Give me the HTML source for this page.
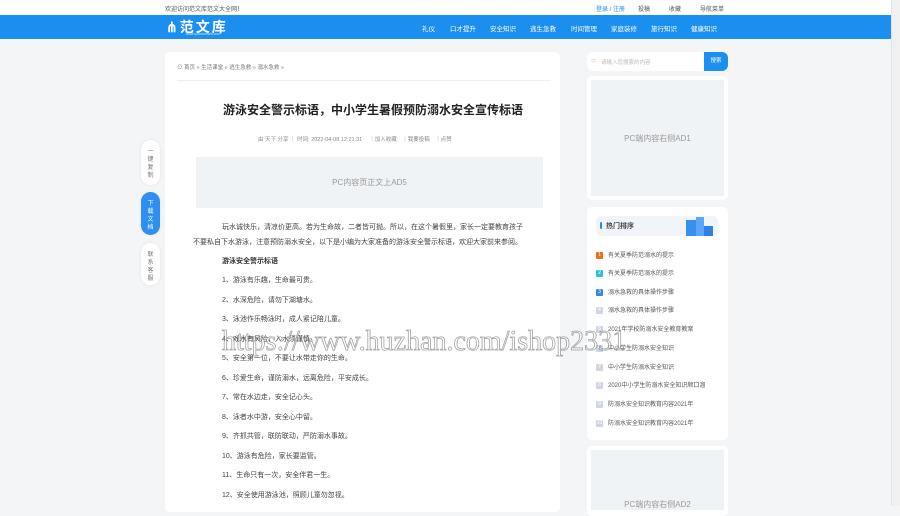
<!DOCTYPE html>
<html><head><meta charset="utf-8"><style>
*{margin:0;padding:0;box-sizing:border-box}
body{width:900px;height:506px;overflow:hidden;background:#f4f5f7;font-family:"Liberation Sans","Noto Sans CJK SC",sans-serif;color:#333;position:relative}
.top{position:absolute;left:0;top:0;width:891px;height:15px;background:#fff;font-size:6px;color:#555}
.nav{position:absolute;left:0;top:15px;width:891px;height:24px;background:#1b8ff0}
.nav span{position:absolute;top:8px;font-size:6.5px;color:#fff}
.sb{position:absolute;right:0;top:0;width:9px;height:506px;background:#f0f0f0;border-left:1px solid #e4e4e4}
.card{position:absolute;background:#fff;border-radius:5px}
.ad{position:absolute;background:#f0f3f6;color:#999;display:flex;align-items:center;justify-content:center}
.p{position:absolute;font-size:7px;color:#444;white-space:nowrap}
.fb{position:absolute;left:141px;width:19px;border-radius:10px;background:#fff;font-size:6px;color:#777;text-align:center;line-height:8px;padding-top:8px;box-shadow:0 0 3px rgba(0,0,0,.08)}
.hot{position:absolute;left:596px;font-size:6px;color:#555;white-space:nowrap}
.hot b{display:inline-block;width:7px;height:7px;border-radius:1px;background:#cfd6df;color:#fff;font-size:5px;text-align:center;line-height:7px;margin-right:5px;font-weight:normal;vertical-align:middle}
.wm{position:absolute;left:222px;top:326px;font-family:"Liberation Serif",serif;font-size:28px;color:rgba(255,255,255,.3);-webkit-text-stroke:0.8px rgba(90,90,90,.55);white-space:nowrap}
</style></head><body>
<div class="top"><span style="position:absolute;left:165px;top:4px">欢迎访问范文库范文大全网！</span>
<span style="position:absolute;left:596px;top:4px;color:#1b8ff0">登录 / 注册</span>
<span style="position:absolute;left:638px;top:4px">投稿</span><span style="position:absolute;left:669px;top:4px">收藏</span><span style="position:absolute;left:700px;top:4px">导航菜单</span></div>
<div class="nav">
<span style="left:166px;top:2px;font-size:14px;font-weight:bold;letter-spacing:2px">⋔范文库</span>
<span style="left:186px;top:17px;font-size:3.5px;opacity:.8">www.yourdomain.com</span>
<span style="left:422px">礼仪</span><span style="left:450px">口才提升</span><span style="left:490px">安全知识</span><span style="left:530px">逃生急救</span><span style="left:571px">时间管理</span><span style="left:611px">家庭装修</span><span style="left:651px">旅行知识</span><span style="left:691px">健康知识</span>
</div>
<div class="card" style="left:165px;top:52px;width:395px;height:460px"></div>
<div class="p" style="left:177px;top:63px;font-size:5.5px;color:#777">⊙ 首页 » 生活课堂 » 逃生急救 » 溺水急救 »</div>
<div style="position:absolute;left:177px;top:80px;width:374px;height:1px;background:#eee"></div>
<div class="p" style="left:223px;top:101px;font-size:12px;font-weight:bold;color:#222">游泳安全警示标语，中小学生暑假预防溺水安全宣传标语</div>
<div class="p" style="left:258px;top:135px;font-size:5.5px;color:#888">由 天下 分享 ｜ 时间: 2022-04-08 12:21:31 　｜加入收藏　｜我要投稿　｜点赞</div>
<div class="ad" style="left:196px;top:157px;width:347px;height:51px;font-size:8px">PC内容页正文上AD5</div>
<div class="p" style="left:222px;top:222px">玩水诚快乐，清凉价更高。若为生命故，二者皆可抛。所以，在这个暑假里，家长一定要教育孩子</div>
<div class="p" style="left:193px;top:237px">不要私自下水游泳，注意预防溺水安全，以下是小编为大家准备的游泳安全警示标语，欢迎大家前来参阅。</div>
<div class="p" style="left:222px;top:256px;font-weight:bold;color:#333">游泳安全警示标语</div>
<div class="p" style="left:222px;top:275px">1、游泳有乐趣，生命最可贵。</div>
<div class="p" style="left:222px;top:295px">2、水深危险，请勿下湖塘水。</div>
<div class="p" style="left:222px;top:314px">3、泳池作乐畅泳时，成人紧记陪儿童。</div>
<div class="p" style="left:222px;top:334px">4、戏水有风险，入水须谨慎。</div>
<div class="p" style="left:222px;top:353px">5、安全第一位，不要让水带走你的生命。</div>
<div class="p" style="left:222px;top:373px">6、珍爱生命，谨防溺水，远离危险，平安成长。</div>
<div class="p" style="left:222px;top:392px">7、常在水边走，安全记心头。</div>
<div class="p" style="left:222px;top:412px">8、泳者水中游，安全心中留。</div>
<div class="p" style="left:222px;top:431px">9、齐抓共管，联防联动，严防溺水事故。</div>
<div class="p" style="left:222px;top:451px">10、游泳有危险，家长要监管。</div>
<div class="p" style="left:222px;top:470px">11、生命只有一次，安全伴君一生。</div>
<div class="p" style="left:222px;top:490px">12、安全使用游泳池，照顾儿童勿忽视。</div>
<div class="fb" style="top:140px;height:45px">一<br>键<br>复<br>制</div>
<div class="fb" style="top:192px;height:43px;background:#2d8ff0;color:#fff">下<br>载<br>文<br>档</div>
<div class="fb" style="top:243px;height:42px">联<br>系<br>客<br>服</div>
<div class="card" style="left:587px;top:52px;width:141px;height:19px;border-radius:6px"></div>
<div class="p" style="left:591px;top:56px;font-size:8px;color:#e0a080">○</div>
<div class="p" style="left:601px;top:58px;font-size:5.5px;color:#bbb">请输入您搜索的内容</div>
<div style="position:absolute;left:704px;top:52px;width:24px;height:19px;background:#1b8ff0;border-radius:0 6px 6px 0;color:#fff;font-size:5.5px;text-align:center;line-height:19px">搜索</div>
<div class="card" style="left:587px;top:76px;width:141px;height:124px"></div>
<div class="ad" style="left:591px;top:80px;width:133px;height:116px;font-size:8px">PC端内容右侧AD1</div>
<div class="card" style="left:587px;top:207px;width:141px;height:233px"></div>
<div style="position:absolute;left:596px;top:216px;width:122px;height:20px;background:#f1f4f8;border-radius:5px"></div>
<div style="position:absolute;left:600px;top:222px;width:2px;height:7px;background:#1b8ff0;border-radius:1px"></div>
<div class="p" style="left:606px;top:221px;font-size:7px;font-weight:bold">热门排序</div>
<div style="position:absolute;left:686px;top:220px;width:10px;height:16px;background:#3a8ef0"></div>
<div style="position:absolute;left:696px;top:217px;width:8px;height:19px;background:#5aa8f5"></div>
<div style="position:absolute;left:704px;top:226px;width:9px;height:10px;background:#2f7fe8"></div>
<div class="hot" style="top:250px"><b style="background:#f06a1f">1</b>有关夏季防范溺水的提示</div>
<div class="hot" style="top:268px"><b style="background:#2cc3d8">2</b>有关夏季防范溺水的提示</div>
<div class="hot" style="top:287px"><b style="background:#3b87e0">3</b>溺水急救的具体操作步骤</div>
<div class="hot" style="top:305px"><b>4</b>溺水急救的具体操作步骤</div>
<div class="hot" style="top:324px"><b>5</b>2021年学校防溺水安全教育教案</div>
<div class="hot" style="top:343px"><b>6</b>中小学生防溺水安全知识</div>
<div class="hot" style="top:362px"><b>7</b>中小学生防溺水安全知识</div>
<div class="hot" style="top:380px"><b>8</b>2020中小学生防溺水安全知识顺口溜</div>
<div class="hot" style="top:399px"><b>9</b>防溺水安全知识教育内容2021年</div>
<div class="hot" style="top:418px"><b>10</b>防溺水安全知识教育内容2021年</div>
<div class="card" style="left:587px;top:446px;width:141px;height:70px"></div>
<div class="ad" style="left:591px;top:450px;width:133px;height:60px;font-size:8px;align-items:flex-end">PC端内容右侧AD2</div>
<div class="wm">https://www.huzhan.com/ishop2331</div>
<div class="sb"></div>
</body></html>
